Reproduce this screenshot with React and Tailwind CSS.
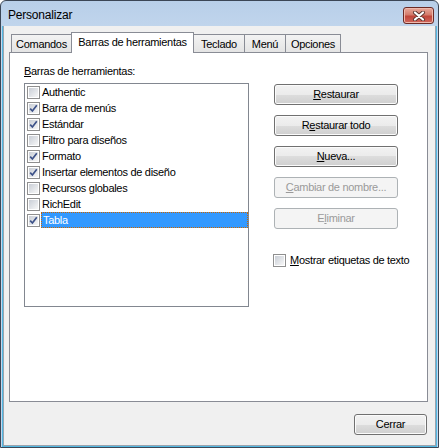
import React from "react";

function Check({ checked }) {
  return (
    <span className="w-[13px] h-[13px] shrink-0 border border-[#8f8f8f] bg-white p-px flex">
      <span className="flex-1 bg-[linear-gradient(135deg,#c9ced6,#f7f7f7)] flex items-center justify-center">
        {checked && (
          <svg width="9" height="9" viewBox="0 0 9 9">
            <path d="M1.2 4.6 L3.4 7 L7.8 1.2" fill="none" stroke="#3d5289" strokeWidth="1.7" />
          </svg>
        )}
      </span>
    </span>
  );
}

function Btn({ children, disabled, className = "" }) {
  return (
    <div
      className={
        "h-[21px] rounded-[3px] border flex items-center justify-center " +
        (disabled
          ? "border-[#adb2b5] bg-[#f4f4f4] text-[#9a9a9a] "
          : "border-[#707070] bg-[linear-gradient(#f2f2f2_0%,#ebebeb_50%,#dddddd_50%,#cfcfcf_100%)] shadow-[inset_0_0_0_1px_#fbfbfb] text-black ") +
        className
      }
    >
      {children}
    </div>
  );
}

const items = [
  ["Authentic", false],
  ["Barra de menús", true],
  ["Estándar", true],
  ["Filtro para diseños", false],
  ["Formato", true],
  ["Insertar elementos de diseño", true],
  ["Recursos globales", false],
  ["RichEdit", false],
  ["Tabla", true],
];

export default function App() {
  return (
    <div className="w-[439px] h-[448px] rounded-t-[6px] border border-[#3b4656] bg-[linear-gradient(#b8cfe9,#c5d8ee_40px,#c2d6ee)] flex flex-col font-['Liberation_Sans',Arial,sans-serif] text-[11px] tracking-[-0.3px] text-black">
      {/* Title bar */}
      <div className="h-[25px] flex items-center justify-between pl-[7px] pr-[4px] shrink-0">
        <span className="text-[12px] tracking-[-0.2px] mt-[2px]">Personalizar</span>
        <div className="w-[31px] h-[17px] mt-[4px] rounded-[3px] border border-[#6b2a25] bg-[linear-gradient(#e8a99b,#d47b6b_45%,#c0463a_55%,#d0665c)] shadow-[inset_0_0_0_1px_#eeb9ad] flex items-center justify-center">
          <svg width="14" height="10" viewBox="0 0 14 10">
            <path d="M3 1.5 L11 8.5 M11 1.5 L3 8.5" stroke="#5a3630" strokeWidth="4" strokeLinecap="round" />
            <path d="M3 1.5 L11 8.5 M11 1.5 L3 8.5" stroke="#ffffff" strokeWidth="2.2" strokeLinecap="round" />
          </svg>
        </div>
      </div>
      {/* Client */}
      <div className="flex-1 px-px flex">
        <div className="flex-1 border-x border-b border-[#52b8e2] flex">
          <div className="flex-1 border-x border-b border-[#9aa3ae] bg-[#f0f0f0] flex flex-col pt-[6px] pl-[5px]">
            {/* Tabs */}
            <div className="flex items-end h-[20px] ml-[2px] relative z-10">
              <div className="w-[60px] h-[18px] border-l border-t border-[#898c95] bg-[linear-gradient(#f3f3f3,#e4e4e4)] flex items-center justify-center pt-[1px]">
                Comandos
              </div>
              <div className="w-[123px] h-[21px] -mb-px border-x border-t border-[#898c95] bg-white flex items-center justify-center pb-[2px]">
                Barras de herramientas
              </div>
              <div className="w-[50px] h-[18px] border-t border-[#898c95] bg-[linear-gradient(#f3f3f3,#e4e4e4)] flex items-center justify-center pt-[1px]">
                Teclado
              </div>
              <div className="w-[41px] h-[18px] border-l border-t border-[#898c95] bg-[linear-gradient(#f3f3f3,#e4e4e4)] flex items-center justify-center pt-[1px]">
                Menú
              </div>
              <div className="w-[56px] h-[18px] border-x border-t border-[#898c95] bg-[linear-gradient(#f3f3f3,#e4e4e4)] flex items-center justify-center pt-[1px]">
                Opciones
              </div>
            </div>
            {/* Panel */}
            <div className="w-[419px] h-[350px] shrink-0 border border-[#898c95] bg-white pt-[12px] pl-[14px] flex flex-col">
              <div className="h-[13px] leading-[13px]">
                <span className="underline">B</span>arras de herramientas:
              </div>
              <div className="flex mt-[5px]">
                <div className="w-[225px] h-[224px] border border-[#828790] bg-white flex flex-col">
                  {items.map(([label, checked], i) => {
                    const sel = label === "Tabla";
                    return (
                      <div key={i} className="h-[16px] flex items-center pl-[2px]">
                        <Check checked={checked} />
                        {sel ? (
                          <span className="ml-[1px] flex-1 h-[16px] bg-[#3399ff] border border-dotted border-[#cc6600] text-white flex items-center pl-[1px]">
                            {label}
                          </span>
                        ) : (
                          <span className="ml-[2px]">{label}</span>
                        )}
                      </div>
                    );
                  })}
                </div>
                <div className="ml-[25px] mt-[1px] w-[124px] flex flex-col gap-[10px]">
                  <Btn>
                    <span><span className="underline">R</span>estaurar</span>
                  </Btn>
                  <Btn>
                    <span>R<span className="underline">e</span>staurar todo</span>
                  </Btn>
                  <Btn>
                    <span><span className="underline">N</span>ueva...</span>
                  </Btn>
                  <Btn disabled>
                    <span><span className="underline">C</span>ambiar de nombre...</span>
                  </Btn>
                  <Btn disabled>
                    <span>E<span className="underline">l</span>iminar</span>
                  </Btn>
                  <div className="flex items-center -ml-px mt-[13px] gap-[4px] whitespace-nowrap">
                    <Check checked={false} />
                    <span><span className="underline">M</span>ostrar etiquetas de texto</span>
                  </div>
                </div>
              </div>
            </div>
            {/* Footer */}
            <div className="flex justify-end mt-[12px] pr-[8px]">
              <Btn className="w-[73px]">Cerrar</Btn>
            </div>
          </div>
        </div>
      </div>
    </div>
  );
}
